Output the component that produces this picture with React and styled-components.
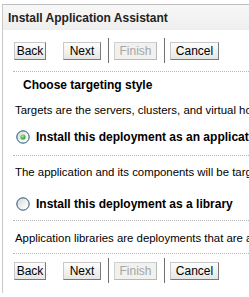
import React from "react";
import styled, { createGlobalStyle } from "styled-components";

const Global = createGlobalStyle`
  html, body { margin: 0; padding: 0; background: #fff; }
  body { font-family: "Liberation Sans", Arial, sans-serif; font-size: 11px; color: #000; overflow: hidden; }
`;

const Panel = styled.div`
  margin: 4px 0 0 2px;
  border-left: 1px solid #c9c9c9;
  border-top: 1px solid #c0c0c0;
  height: 288px;
  overflow: hidden;
`;

const Header = styled.div`
  height: 25px;
  background: linear-gradient(#f7f7f7, #efefef);
  display: flex;
  align-items: center;
  padding-left: 5px;
  font-weight: bold;
  font-size: 12px;
  color: #222;
`;

const Body = styled.div`
  padding-left: 11px;
`;

const Toolbar = styled.div`
  display: flex;
  align-items: center;
  height: 25px;
  margin: ${(p) => p.$m};
`;

const Btn = styled.button`
  font-family: inherit;
  font-size: 12px;
  width: ${(p) => p.$w}px;
  height: 18px;
  padding: 0;
  margin-right: ${(p) => p.$mr || 0}px;
  background: linear-gradient(#fdfdfd, #e6e6e2);
  border: 1px solid;
  border-color: #c8c8c8 #7a7a7a #7a7a7a #c8c8c8;
  color: #000;
  line-height: 16px;
  &:disabled {
    color: #a6a6a6;
    background: #f1f1ee;
    border-color: #d0d0d0 #b8b8b8 #b8b8b8 #d0d0d0;
  }
`;

const Sep = styled.div`
  width: 1px;
  height: 25px;
  background: #707070;
  margin-right: 5px;
`;

const Dotted = styled.div`
  border-top: 1px dotted #b8b8b8;
  margin-top: ${(p) => p.$mt || 0}px;
  margin-left: -1px;
`;

const Heading = styled.div`
  font-weight: bold;
  font-size: 12px;
  line-height: 14px;
  padding: 6px 0 0 9px;
`;

const Text = styled.div`
  white-space: nowrap;
  font-size: 11.4px;
  line-height: 14px;
  padding-top: ${(p) => p.$pt}px;
  padding-left: 1px;
`;

const RadioRow = styled.label`
  display: flex;
  align-items: center;
  gap: 6px;
  white-space: nowrap;
  font-weight: bold;
  font-size: 12px;
  line-height: 14px;
  height: 14px;
  padding: ${(p) => p.$pt}px 0 0 2px;
`;

const RadioIcon = styled.svg`
  flex-shrink: 0;
`;

const Radio = ({ checked, id }) => (
  <RadioIcon width="14" height="14" viewBox="0 0 14 14">
    <defs>
      <linearGradient id={`rg${id}`} x1="0" y1="0" x2="1" y2="1">
        <stop offset="0" stopColor="#d6d6cf" />
        <stop offset="0.7" stopColor="#f8f8f6" />
        <stop offset="1" stopColor="#ffffff" />
      </linearGradient>
      <radialGradient id={`dot${id}`} cx="0.4" cy="0.35" r="0.65">
        <stop offset="0" stopColor="#a6f0a0" />
        <stop offset="1" stopColor="#1f9a1f" />
      </radialGradient>
    </defs>
    <circle cx="7" cy="7" r="6.2" fill={`url(#rg${id})`} stroke="#1c5180" strokeWidth="1" />
    {checked && <circle cx="7" cy="7" r="2.6" fill={`url(#dot${id})`} />}
  </RadioIcon>
);

const Buttons = ({ m }) => (
  <Toolbar $m={m}>
    <Btn $w={32} $mr={17}>Back</Btn>
    <Btn $w={38} $mr={7}>Next</Btn>
    <Sep />
    <Btn $w={43} $mr={7} disabled>Finish</Btn>
    <Sep />
    <Btn $w={49}>Cancel</Btn>
  </Toolbar>
);

export default function App() {
  return (
    <>
      <Global />
      <Panel>
        <Header>Install Application Assistant</Header>
        <Body>
          <Buttons m="8px 0 0 0" />
          <Dotted $mt={8} />
          <Heading>Choose targeting style</Heading>
          <Text $pt={11}>Targets are the servers, clusters, and virtual hosts on which this deployment will run.</Text>
          <RadioRow $pt={13}>
            <Radio checked id="a" />
            Install this deployment as an application
          </RadioRow>
          <Dotted $mt={11} />
          <Text $pt={9}>The application and its components will be targeted to the same locations.</Text>
          <RadioRow $pt={18}>
            <Radio id="b" />
            Install this deployment as a library
          </RadioRow>
          <Dotted $mt={9} />
          <Text $pt={10}>Application libraries are deployments that are available for other deployments to share.</Text>
          <Dotted $mt={8} />
          <Buttons m="4px 0 0 0" />
        </Body>
      </Panel>
    </>
  );
}
